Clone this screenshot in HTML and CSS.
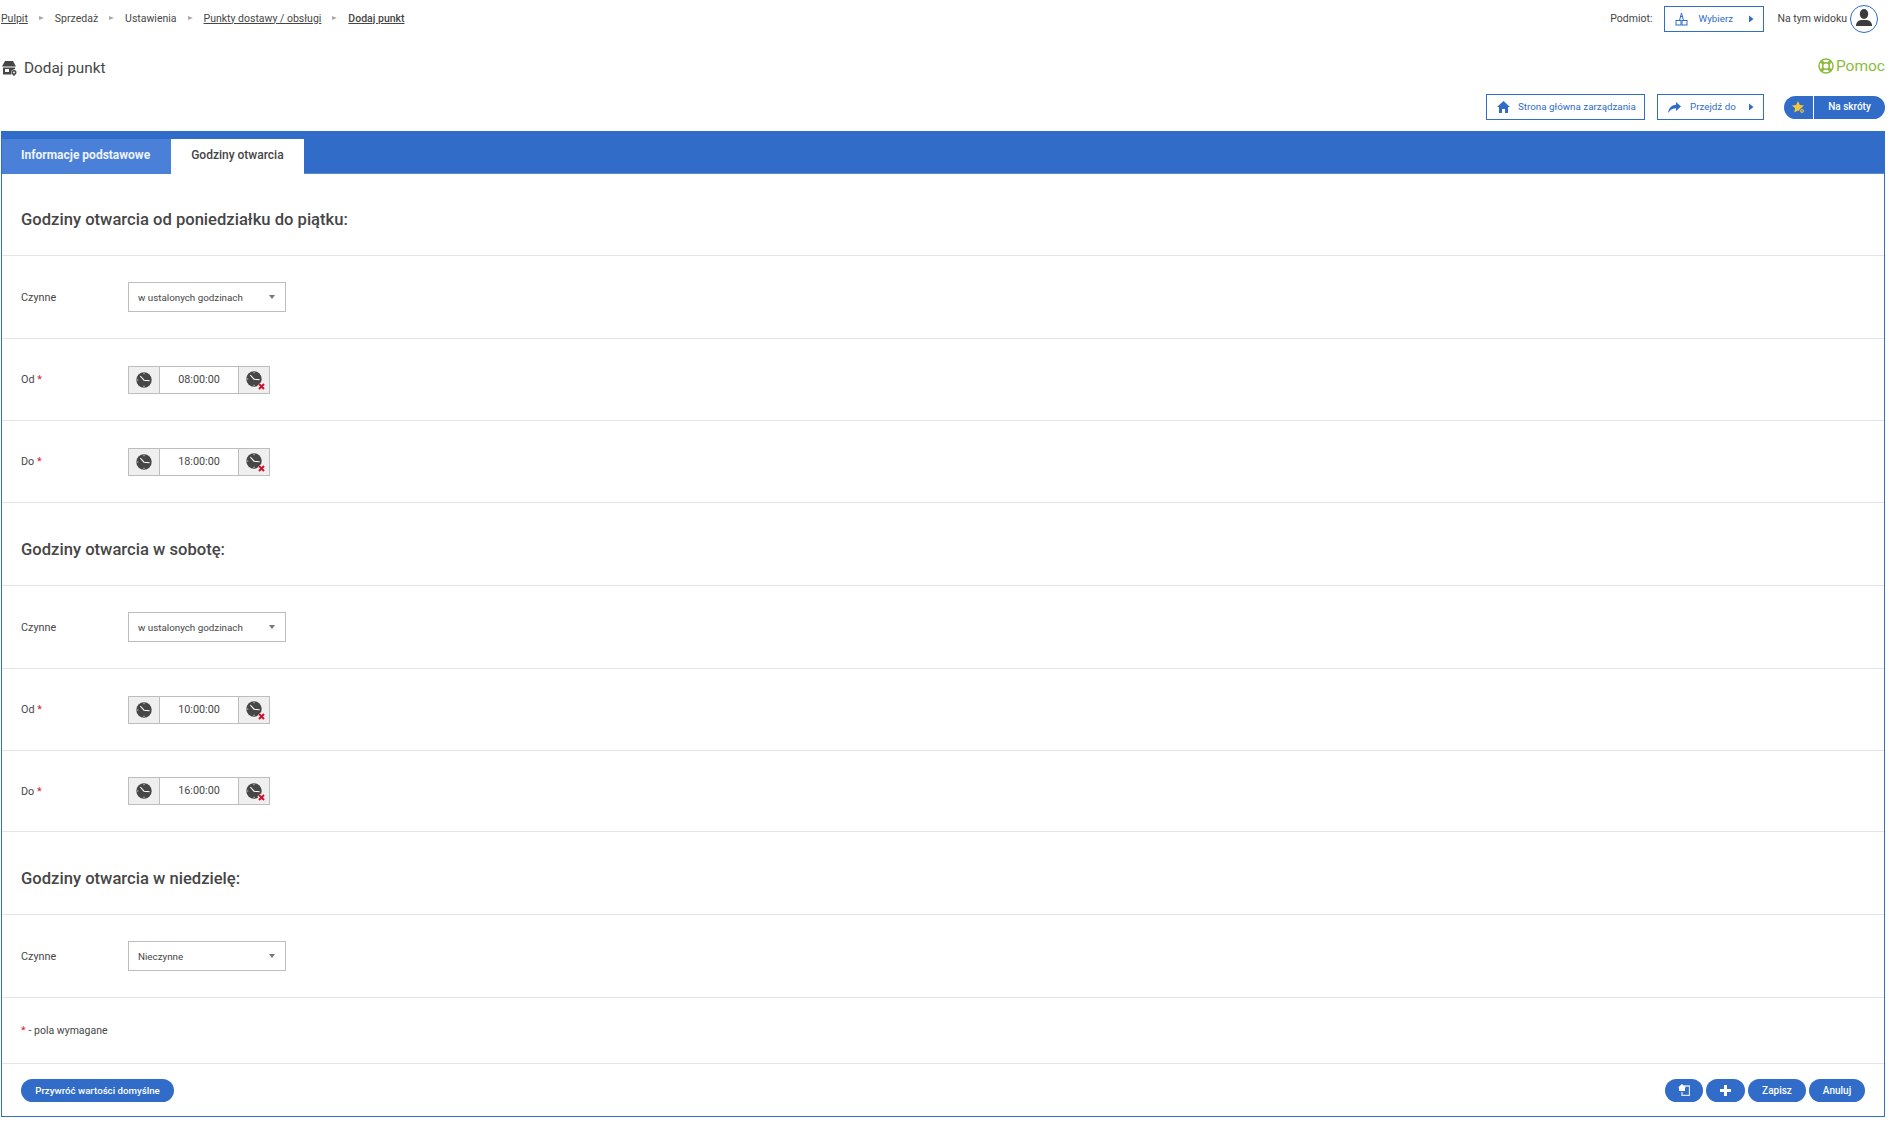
FILE: index.html
```html
<!DOCTYPE html>
<html>
<head>
    <title>Dodaj punkt</title>
    <link rel="stylesheet" href="styles.css">
</head>
<body>
    <svg class="sprites" width="0" height="0">
        <symbol id="clock" viewBox="0 0 16 16">
            <circle cx="8" cy="8" r="7.700" fill="#464646"/>
            <path d="M4.300 4 8 8.200l5.600.6" fill="none" stroke="#fff" stroke-width="1.100"/>
            <path d="M8 1v1.300M8 13.700V15M1 8h1.300" stroke="#ccc" stroke-width="1"/>
        </symbol>
        <symbol id="clear" viewBox="0 0 9 9">
            <path d="M2 2l5 5M7 2 2 7" stroke="#efefef" stroke-width="4.500"/>
            <path d="M2 2l5 5M7 2 2 7" stroke="#d0102c" stroke-width="2"/>
        </symbol>
        <symbol id="arrow" viewBox="0 0 6 8">
            <path d="M1 0.500 5.500 4 1 7.500z"/>
        </symbol>
    </svg>

    <div class="topbar">
        <div class="crumbs">
            <a href="#">Pulpit</a><span class="sep"></span>
            <span>Sprzedaż</span><span class="sep"></span>
            <span>Ustawienia</span><span class="sep"></span>
            <a href="#">Punkty dostawy / obsługi</a><span class="sep"></span>
            <a href="#" class="current">Dodaj punkt</a>
        </div>
        <div class="context">
            <span class="context-label">Podmiot:</span>
            <a href="#" class="btn-outline btn-wybierz">
                <svg class="btn-icon" width="13" height="14" viewBox="0 0 13 14" fill="none" stroke="#306cc8">
                    <path d="M6.500 1 4.500 8.500M6.500 1l2 7.500M5 4.500h3"/>
                    <rect x="1" y="8.500" width="5" height="4.500"/>
                    <rect x="7" y="8.500" width="5" height="4.500"/>
                </svg>
                <span class="btn-text">Wybierz</span>
                <svg class="btn-arrow" width="6" height="8"><use href="#arrow"/></svg>
            </a>
            <span class="view-label">Na tym widoku</span>
            <span class="avatar">
                <svg width="16" height="17" viewBox="0 0 16 17" fill="#3c3c3c">
                    <ellipse cx="8" cy="5" rx="4.200" ry="5"/>
                    <path d="M0 17c0-4 2.500-5.500 5-6h6c2.500.5 5 2 5 6z"/>
                </svg>
            </span>
        </div>
    </div>

    <div class="titlebar">
        <h1>
            <svg width="16" height="16" viewBox="0 0 16 16" fill="#464646">
                <path d="M4 1h8l3 5.500H1z"/>
                <path d="M2 7.500h12v1.800a3.400 3.400 0 0 0-3.400 5.200H2zM4 9v3h4V9z" fill-rule="evenodd"/>
                <path d="M13 10a2.500 2.500 0 0 1 2.500 2.500C15.500 14 13 16 13 16s-2.500-2-2.500-3.500A2.500 2.500 0 0 1 13 10z"/>
                <circle cx="13" cy="12.500" r="0.900" fill="#fff"/>
            </svg>
            Dodaj punkt
        </h1>
        <a href="#" class="help">
            <svg width="16" height="16" viewBox="0 0 16 16" fill="none" stroke="#8cbc3c">
                <circle cx="8" cy="8" r="7" stroke-width="1.500"/>
                <circle cx="8" cy="8" r="3.300" stroke-width="1.500"/>
                <path d="M3 3l2.600 2.600M13 3l-2.600 2.600M3 13l2.600-2.600M13 13l-2.600-2.600" stroke-width="3"/>
            </svg>
            Pomoc
        </a>
    </div>

    <div class="actionbar">
        <a href="#" class="btn-outline btn-home">
            <svg class="btn-icon" width="13" height="12" viewBox="0 0 13 12" fill="#306cc8">
                <path d="M6.500 0 13 6h-2v6H8V8H5v4H2V6H0z"/>
            </svg>
            <span class="btn-text">Strona główna zarządzania</span>
        </a>
        <a href="#" class="btn-outline btn-goto">
            <svg class="btn-icon" width="13" height="11" viewBox="0 0 13 11" fill="#306cc8">
                <path d="M8 0l5 4.500L8 9V6.300C5 6.300 2.500 7.500 0 11 .6 6.500 3.500 3 8 2.700z"/>
            </svg>
            <span class="btn-text">Przejdź do</span>
            <svg class="btn-arrow" width="6" height="8"><use href="#arrow"/></svg>
        </a>
        <div class="shortcut">
            <span class="shortcut-star">
                <svg width="13" height="13" viewBox="0 0 13 13">
                    <path d="M6 0l1.800 3.900 4.200.5-3.100 2.800.8 4.200L6 9.400 2.300 11.400l.8-4.200L0 4.400l4.200-.5z" fill="#f5c93a"/>
                    <circle cx="10" cy="10" r="2.400" fill="#f5c93a" stroke="#306cc8"/>
                    <circle cx="10" cy="10" r="0.800" fill="#306cc8"/>
                </svg>
            </span>
            <span class="shortcut-text">Na skróty</span>
        </div>
    </div>

    <div class="panel">
        <div class="tabs">
            <a href="#" class="tab">Informacje podstawowe</a>
            <a href="#" class="tab active">Godziny otwarcia</a>
        </div>

        <h2 class="section">Godziny otwarcia od poniedziałku do piątku:</h2>
        <div class="row">
            <label>Czynne</label>
            <div class="select">w ustalonych godzinach</div>
        </div>
        <div class="row row-time">
            <label>Od <em>*</em></label>
            <div class="time">
                <span class="time-btn"><svg width="16" height="16"><use href="#clock"/></svg></span>
                <span class="time-value">08:00:00</span>
                <span class="time-btn clear"><svg width="16" height="16"><use href="#clock"/></svg><svg class="clear-x" width="9" height="9"><use href="#clear"/></svg></span>
            </div>
        </div>
        <div class="row row-time">
            <label>Do <em>*</em></label>
            <div class="time">
                <span class="time-btn"><svg width="16" height="16"><use href="#clock"/></svg></span>
                <span class="time-value">18:00:00</span>
                <span class="time-btn clear"><svg width="16" height="16"><use href="#clock"/></svg><svg class="clear-x" width="9" height="9"><use href="#clear"/></svg></span>
            </div>
        </div>

        <h2 class="section">Godziny otwarcia w sobotę:</h2>
        <div class="row">
            <label>Czynne</label>
            <div class="select">w ustalonych godzinach</div>
        </div>
        <div class="row row-time">
            <label>Od <em>*</em></label>
            <div class="time">
                <span class="time-btn"><svg width="16" height="16"><use href="#clock"/></svg></span>
                <span class="time-value">10:00:00</span>
                <span class="time-btn clear"><svg width="16" height="16"><use href="#clock"/></svg><svg class="clear-x" width="9" height="9"><use href="#clear"/></svg></span>
            </div>
        </div>
        <div class="row row-time row-short">
            <label>Do <em>*</em></label>
            <div class="time">
                <span class="time-btn"><svg width="16" height="16"><use href="#clock"/></svg></span>
                <span class="time-value">16:00:00</span>
                <span class="time-btn clear"><svg width="16" height="16"><use href="#clock"/></svg><svg class="clear-x" width="9" height="9"><use href="#clear"/></svg></span>
            </div>
        </div>

        <h2 class="section">Godziny otwarcia w niedzielę:</h2>
        <div class="row">
            <label>Czynne</label>
            <div class="select">Nieczynne</div>
        </div>

        <div class="required"><em>*</em> - pola wymagane</div>

        <div class="footer">
            <a href="#" class="btn-round btn-defaults">Przywróć wartości domyślne</a>
            <div class="footer-right">
                <a href="#" class="btn-round btn-back">
                    <svg width="12" height="12" viewBox="0 0 12 12">
                        <path d="M6 2h5.500v9.500H4V8" fill="none" stroke="#dbe7f8" stroke-width="1.300"/>
                        <path d="M4 0 8 3.500H7V7H1V3.500H0z" fill="#fff"/>
                    </svg>
                </a>
                <a href="#" class="btn-round btn-add">
                    <svg width="11" height="11" viewBox="0 0 11 11" fill="#fff">
                        <path d="M4 0h3v4h4v3H7v4H4V7H0V4h4z"/>
                    </svg>
                </a>
                <a href="#" class="btn-round btn-save">Zapisz</a>
                <a href="#" class="btn-round btn-cancel">Anuluj</a>
            </div>
        </div>
    </div>
</body>
</html>
```

FILE: styles.css
```css
body {
    margin: 0;
    padding: 0 4px 0 1px;
    font-family: Roboto, Arial, sans-serif;
    font-size: 10.800px;
    color: #464646;
    background-color: #fff;
}
a {
    color: inherit;
}
.sprites {
    position: absolute;
}
.topbar {
    display: flex;
    justify-content: space-between;
    align-items: center;
    height: 38px;
}
.crumbs {
    display: flex;
    align-items: center;
    padding-bottom: 2px;
    font-size: 10.500px;
}
.sep {
    width: 0;
    height: 0;
    margin: 0 11px 0 11px;
    border-left: 5px solid #aaa;
    border-top: 2px solid transparent;
    border-bottom: 2px solid transparent;
}
.crumbs .current {
    font-weight: 500;
}
.context {
    display: flex;
    align-items: center;
    padding-right: 7px;
    font-size: 10.500px;
}
.context-label {
    margin-right: 11px;
    padding-bottom: 2px;
}
.view-label {
    margin-left: 14px;
    margin-right: 3px;
    padding-bottom: 2px;
}
.avatar {
    display: flex;
    align-items: flex-end;
    justify-content: center;
    width: 28px;
    height: 28px;
    padding-bottom: 6px;
    box-sizing: border-box;
    border: 1px solid #306cc8;
    border-radius: 50%;
}
.btn-outline {
    display: flex;
    align-items: center;
    height: 26px;
    box-sizing: border-box;
    border: 1px solid #306cc8;
    color: #306cc8;
    font-size: 9.800px;
    text-decoration: none;
}
.btn-icon {
    margin-left: 10px;
}
.btn-text {
    padding-bottom: 1px;
}
.btn-arrow {
    fill: #306cc8;
    margin-left: auto;
    margin-right: 9px;
}
.btn-wybierz {
    width: 100px;
}
.btn-wybierz .btn-text {
    margin-left: 11px;
}
.btn-home {
    width: 159px;
    margin-right: 12px;
}
.btn-home .btn-text {
    margin-left: 8px;
}
.btn-goto {
    width: 107px;
    margin-right: 20px;
}
.btn-goto .btn-text {
    margin-left: 9px;
}
.titlebar {
    display: flex;
    justify-content: space-between;
    align-items: center;
    height: 56px;
}
h1 {
    display: flex;
    align-items: center;
    gap: 7px;
    margin: 0;
    padding-top: 3px;
    font-size: 15.300px;
    font-weight: 400;
}
.help {
    display: flex;
    align-items: center;
    gap: 2px;
    color: #8cbc3c;
    font-size: 15.500px;
    text-decoration: none;
}
.actionbar {
    display: flex;
    justify-content: flex-end;
    align-items: center;
    height: 26px;
    margin-bottom: 11px;
}
.shortcut {
    display: flex;
    height: 23px;
    color: #fff;
    font-size: 10px;
    font-weight: 500;
}
.shortcut-star {
    display: flex;
    align-items: center;
    justify-content: center;
    width: 29px;
    background-color: #306cc8;
    border-radius: 12px 0 0 12px;
    margin-right: 1px;
}
.shortcut-text {
    display: flex;
    align-items: center;
    justify-content: center;
    width: 71px;
    padding-bottom: 1px;
    background-color: #306cc8;
    border-radius: 0 12px 12px 0;
}
.panel {
    border: 1px solid #306cc8;
    box-sizing: border-box;
    height: 986px;
}
.tabs {
    display: flex;
    padding-top: 7px;
    background-color: #306cc8;
    border-bottom: 1px solid #5a8ad4;
}
.tab {
    display: flex;
    align-items: center;
    height: 35px;
    padding: 0 21px 3px 19px;
    box-sizing: border-box;
    margin-bottom: -1px;
    background-color: #4a80d8;
    color: #eef3fb;
    font-size: 12px;
    font-weight: 700;
    text-decoration: none;
}
.tab.active {
    padding: 0 20px 3px 20px;
    background-color: #fff;
    color: #464646;
    font-weight: 500;
}
.section {
    display: flex;
    align-items: center;
    height: 72px;
    margin: 0;
    padding: 10px 0 0 19px;
    border-bottom: 1px solid #e4e4e4;
    font-size: 16.600px;
    font-weight: 500;
}
.tabs + .section {
    height: 71px;
}
.row {
    display: flex;
    align-items: center;
    height: 82px;
    padding-left: 19px;
    border-bottom: 1px solid #e4e4e4;
}
.row-time {
    height: 81px;
}
.row-short {
    height: 80px;
}
.row label {
    width: 107px;
}
em {
    color: #d0262c;
    font-style: normal;
}
.select {
    position: relative;
    display: flex;
    align-items: center;
    width: 158px;
    height: 30px;
    padding-left: 9px;
    box-sizing: border-box;
    border: 1px solid #bdbdbd;
    font-size: 9.800px;
}
.select::after {
    content: "";
    position: absolute;
    right: 10px;
    top: 12px;
    border-top: 4px solid #777;
    border-left: 3px solid transparent;
    border-right: 3px solid transparent;
}
.time {
    display: flex;
    width: 142px;
    height: 28px;
    box-sizing: border-box;
    border: 1px solid #bdbdbd;
}
.time-btn {
    position: relative;
    display: flex;
    align-items: center;
    justify-content: center;
    width: 30px;
    background-color: #efefef;
}
.time-value {
    display: flex;
    align-items: center;
    justify-content: center;
    flex: 1;
    padding-bottom: 1px;
    border-left: 1px solid #bdbdbd;
    border-right: 1px solid #bdbdbd;
}
.clear svg:first-child {
    margin: 0 1px 1px 0;
}
.clear-x {
    position: absolute;
    right: 3px;
    bottom: 2px;
}
.required {
    display: flex;
    align-items: center;
    gap: 3px;
    height: 65px;
    padding-left: 19px;
    font-size: 10.500px;
    border-bottom: 1px solid #e4e4e4;
}
.footer {
    display: flex;
    justify-content: space-between;
    padding: 15px 19px 0 19px;
}
.footer-right {
    display: flex;
    gap: 3px;
}
.btn-round {
    display: flex;
    align-items: center;
    justify-content: center;
    height: 23px;
    padding-bottom: 1px;
    box-sizing: border-box;
    border-radius: 12px;
    background-color: #306cc8;
    color: #fff;
    font-size: 10px;
    font-weight: 500;
    text-decoration: none;
}
.btn-defaults {
    width: 153px;
    font-size: 9.700px;
}
.btn-back {
    width: 38px;
}
.btn-add {
    width: 39px;
}
.btn-save {
    width: 58px;
}
.btn-cancel {
    width: 56px;
}
```
